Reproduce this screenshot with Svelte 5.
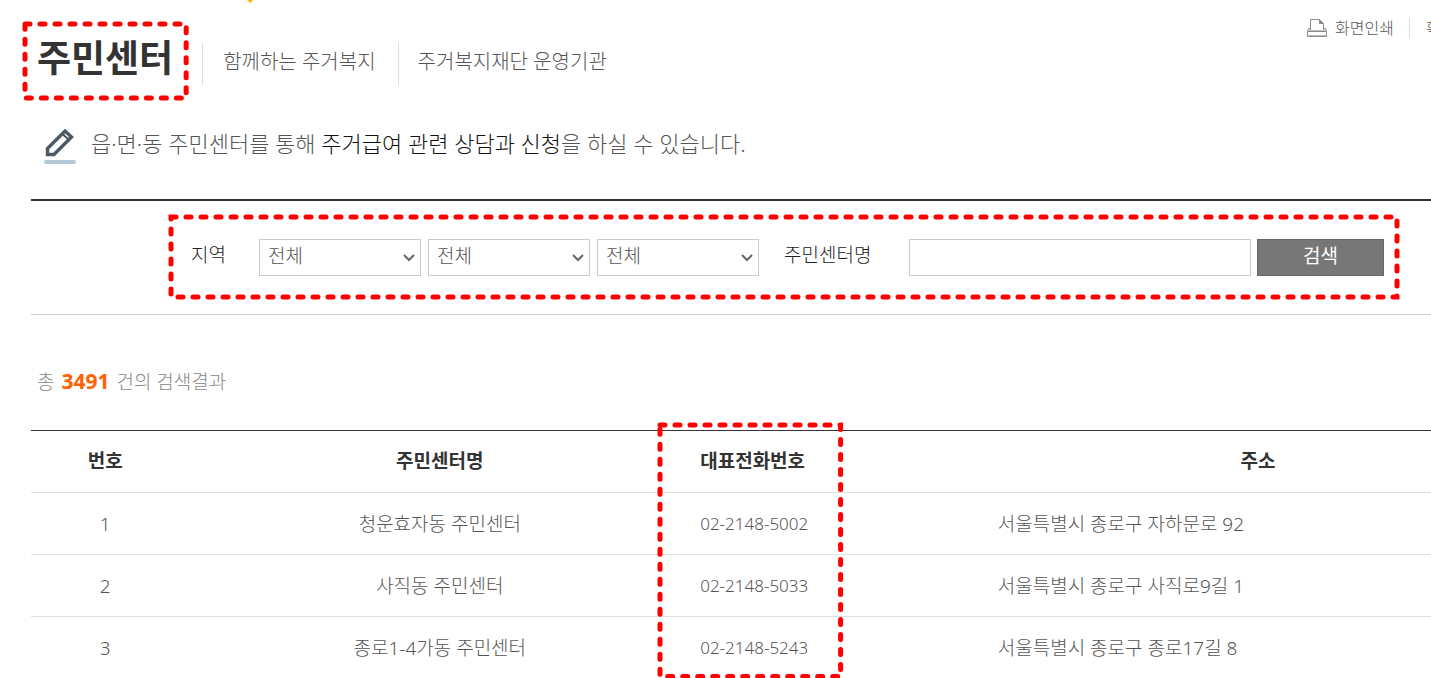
<script>
	let regions = [
		{ id: 'sido', label: '시도' },
		{ id: 'sigungu', label: '시군구' },
		{ id: 'dong', label: '읍면동' }
	];

	let total = 3491;
	let centers = [
		{ no: 1, name: '청운효자동 주민센터', tel: '02-2148-5002', address: '서울특별시 종로구 자하문로 92' },
		{ no: 2, name: '사직동 주민센터', tel: '02-2148-5033', address: '서울특별시 종로구 사직로9길 1' },
		{ no: 3, name: '종로1-4가동 주민센터', tel: '02-2148-5243', address: '서울특별시 종로구 종로17길 8' }
	];

	let keyword = '';
</script>

{#snippet marker()}
	<svg class="marker" aria-hidden="true">
		<rect width="100%" height="100%" />
	</svg>
{/snippet}

<div class="page">
	<svg class="pointer" viewBox="0 0 8 4" aria-hidden="true">
		<path d="M0 0H8L4 4Z" fill="#ffb400" />
	</svg>

	<header>
		<div class="title">
			<h1>주민센터</h1>
			{@render marker()}
		</div>
		<nav>
			<a href="#together">함께하는 주거복지</a>
			<a href="#agency">주거복지재단 운영기관</a>
		</nav>
		<div class="utils">
			<a href="#print">
				<svg width="20" height="18" viewBox="0 0 20 18" fill="none" stroke="#8c8c8c" aria-hidden="true">
					<path d="M3.5 11V.5H12.5L16.5 4.5V11" />
					<path d="M12 0V5H17Z" fill="#8c8c8c" stroke="none" />
					<path d="M3.5 9.500H1.500L.5 12.500V17.500H19.500V12.500L18.500 9.500H16.500M.5 12.500H19.500" />
					<path d="M1 11.500H19M1 16.500H19" stroke="#bbb" />
				</svg>
				화면인쇄
			</a>
			<a href="#zoom">확대</a>
		</div>
	</header>

	<div class="guide">
		<svg width="32" height="37" viewBox="0 0 32 37" fill="none" aria-hidden="true">
			<path d="M3.500 26.500V20.500L21 3L27.500 9L10 26.500Z" stroke="#4c5965" stroke-width="3.400" />
			<path d="M18 5.500L25 12" stroke="#4c5965" stroke-width="2" />
			<path d="M2 34H30" stroke="#b5c9d6" stroke-width="4" stroke-linecap="round" />
		</svg>
		<p>읍·면·동 주민센터를 통해 <strong>주거급여 관련 상담과 신청</strong>을 하실 수 있습니다.</p>
	</div>

	<form on:submit|preventDefault>
		<div class="search">
			<label class="region" for="sido">지역</label>
			<div class="selects">
				{#each regions as region}
					<div class="select">
						<select id={region.id} aria-label={region.label}>
							<option>전체</option>
						</select>
						<svg width="12" height="8" viewBox="0 0 12 8" aria-hidden="true">
							<path d="M1 1L6 6L11 1" fill="none" stroke="#666" stroke-width="2" />
						</svg>
					</div>
				{/each}
			</div>
			<label class="name" for="keyword">주민센터명</label>
			<input id="keyword" type="text" bind:value={keyword} />
			<button type="submit">검색</button>
			{@render marker()}
		</div>
	</form>

	<p class="total">총 <em>{total}</em> 건의 검색결과</p>

	<div class="results">
		<table>
			<thead>
				<tr>
					<th class="no">번호</th>
					<th class="center-name">주민센터명</th>
					<th class="tel">대표전화번호</th>
					<th class="address">주소</th>
				</tr>
			</thead>
			<tbody>
				{#each centers as center}
					<tr>
						<td>{center.no}</td>
						<td>{center.name}</td>
						<td class="tel">{center.tel}</td>
						<td class="address">{center.address}</td>
					</tr>
				{/each}
			</tbody>
		</table>
		<div class="tel-marker">{@render marker()}</div>
	</div>
</div>

<style>
	.page {
		position: relative;
		overflow: hidden;
		background: #fff;
		color: #555;
		font-family: 'Noto Sans', 'Noto Sans CJK KR', sans-serif;
		font-size: 19px;
		font-weight: 300;
		line-height: 28px;
	}

	h1,
	p {
		margin: 0;
	}

	a {
		color: inherit;
		text-decoration: none;
	}

	/* red dashed frame around the parts to look at */
	.marker {
		position: absolute;
		top: 0;
		left: 0;
		width: 100%;
		height: 100%;
		overflow: visible;
		pointer-events: none;
	}

	.marker rect {
		fill: none;
		stroke: #f00;
		stroke-width: 5;
		stroke-linecap: round;
		stroke-dasharray: 5 10;
	}

	.pointer {
		position: absolute;
		top: 0;
		left: 246px;
		width: 8px;
		height: 3px;
	}

	header {
		display: flex;
		align-items: flex-start;
		padding: 24px 0 0 25px;
		white-space: nowrap;
	}

	.title {
		position: relative;
		padding: 6px 13px 12px 12px;
	}

	h1 {
		color: #333;
		font-size: 37px;
		font-weight: 700;
		line-height: 56px;
	}

	nav {
		display: flex;
		margin: 19px 0 0 16px;
		font-size: 20px;
		line-height: 38px;
	}

	nav a {
		padding: 0 22px 4px 20px;
		border-left: 1px solid #ddd;
	}

	nav a + a {
		padding-left: 19px;
	}

	.utils {
		display: flex;
		width: 124px;
		margin: -6px 0 0 auto;
		overflow: hidden;
		font-size: 16px;
		line-height: 20px;
	}

	.utils a {
		display: flex;
		flex: none;
		align-items: center;
		gap: 8px;
	}

	.utils a + a {
		margin-left: 15px;
		padding-left: 16px;
		border-left: 1px solid #ddd;
	}

	.guide {
		display: flex;
		align-items: flex-start;
		gap: 15px;
		padding: 30px 0 34px 44px;
		font-size: 22px;
		line-height: 30px;
	}

	.guide svg {
		flex: none;
	}

	.guide strong {
		color: #111;
		font-weight: 300;
	}

	form {
		margin-left: 31px;
		padding: 16px 34px 17px 140px;
		border-top: 2px solid #333;
		border-bottom: 1px solid #ccc;
	}

	.search {
		position: relative;
		display: flex;
		align-items: center;
		height: 80px;
		padding: 0 13px 0 20px;
		color: #222;
	}

	.search label {
		flex: none;
		padding-bottom: 4px;
	}

	.region {
		width: 68px;
	}

	.selects {
		display: flex;
		gap: 7px;
	}

	.name {
		width: 125px;
		margin-left: 25px;
	}

	.select {
		position: relative;
	}

	select,
	input,
	button {
		box-sizing: border-box;
		height: 37px;
		border: 1px solid #ccc;
		border-radius: 0;
		background: #fff;
		color: #555;
		font: inherit;
	}

	select {
		display: block;
		width: 162px;
		padding: 0 8px 2px;
		appearance: none;
	}

	.select svg {
		position: absolute;
		top: 15px;
		right: 6px;
		pointer-events: none;
	}

	input {
		flex: 1;
		min-width: 0;
		padding: 0 8px;
	}

	button {
		flex: none;
		width: 127px;
		margin-left: 6px;
		padding: 0 0 2px;
		border-color: #666;
		background: #777;
		color: #fff;
		font-weight: 400;
	}

	.total {
		padding: 52px 0 34px 37px;
		color: #888;
	}

	.total em {
		margin: 0 2px;
		color: #ff6000;
		font-size: 21px;
		font-style: normal;
		font-weight: 700;
	}

	.results {
		position: relative;
		margin-left: 31px;
	}

	table {
		width: 100%;
		border-collapse: collapse;
		border-top: 1px solid #333;
		table-layout: fixed;
	}

	th,
	td {
		box-sizing: border-box;
		height: 62px;
		padding: 0;
		text-align: center;
		white-space: nowrap;
	}

	th {
		padding-bottom: 2px;
		color: #333;
		font-weight: 700;
	}

	td {
		border-top: 1px solid #e0e0e0;
	}

	.no {
		width: 10.6%;
	}

	.center-name {
		width: 37.2%;
	}

	.tel {
		width: 7.9%;
		text-align: left;
	}

	td.tel {
		font-size: 17px;
	}

	th.address {
		padding-left: 274px;
	}

	td.address {
		padding-left: 187px;
		text-align: left;
	}

	.tel-marker {
		position: absolute;
		top: -5px;
		bottom: 2px;
		left: 44.9%;
		width: 12.9%;
	}
</style>
